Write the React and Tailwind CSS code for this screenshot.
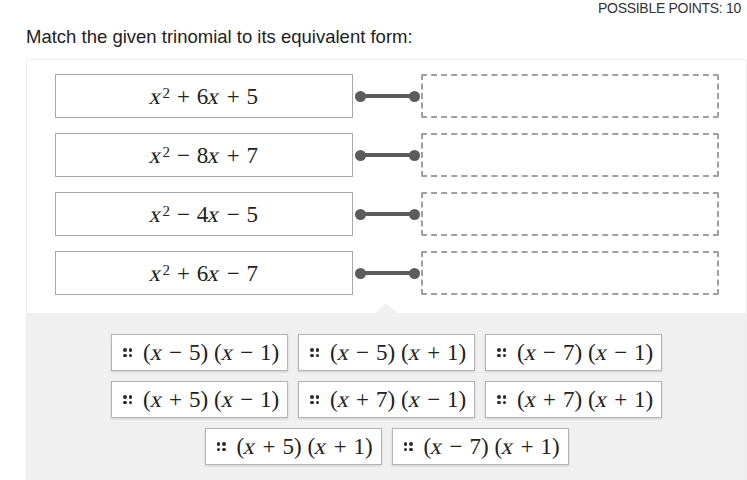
import { Fragment } from "react"

const trinomials = [
  ["+", "6", "+", "5"],
  ["−", "8", "+", "7"],
  ["−", "4", "−", "5"],
  ["+", "6", "−", "7"],
]

const answers = [
  [["−", "5"], ["−", "1"]],
  [["−", "5"], ["+", "1"]],
  [["−", "7"], ["−", "1"]],
  [["+", "5"], ["−", "1"]],
  [["+", "7"], ["−", "1"]],
  [["+", "7"], ["+", "1"]],
  [["+", "5"], ["+", "1"]],
  [["−", "7"], ["+", "1"]],
]

const mathFont = "font-['Liberation_Serif','DejaVu_Serif',serif]"

// variable x, slanted like a math italic
function X() {
  return <span className="inline-block -skew-x-12">x</span>
}

function Op({ children }) {
  return <span className="mx-[0.3em]">{children}</span>
}

function Trinomial({ terms }) {
  const [s1, b, s2, c] = terms
  return (
    <span className={`${mathFont} text-[23px] text-[#222] leading-none`}>
      <X />
      <sup className="text-[15px] relative -top-[6px] ml-[1px]">2</sup>
      <Op>{s1}</Op>
      {b}
      <X />
      <Op>{s2}</Op>
      {c}
    </span>
  )
}

function Factor({ sign, n }) {
  return (
    <span>
      (<X />
      <Op>{sign}</Op>
      {n})
    </span>
  )
}

function Grip() {
  return (
    <span className="grid grid-cols-2 gap-[2px] mr-[11px]">
      {[0, 1, 2, 3].map(i => (
        <span key={i} className="w-[3.5px] h-[3.5px] rounded-full bg-[#2a2a2a]"></span>
      ))}
    </span>
  )
}

function Chip({ factors }) {
  return (
    <div className="w-[177px] h-[37px] bg-white border border-[#b5b5b5] shadow-[0_1px_2px_rgba(0,0,0,0.15)] flex items-center pl-[11px]">
      <Grip />
      <span className={`${mathFont} text-[23px] text-[#222] leading-none whitespace-nowrap`}>
        {factors.map(([sign, n], i) => (
          <Fragment key={i}>
            {i > 0 && <span className="inline-block w-[6px]"></span>}
            <Factor sign={sign} n={n} />
          </Fragment>
        ))}
      </span>
    </div>
  )
}

export default function App() {
  return (
    <div className="w-[747px] h-[480px] bg-white overflow-hidden font-['Liberation_Sans',Arial,sans-serif] text-[#333] flex flex-col">
      {/* Header */}
      <div className="text-right text-[14px] leading-[14px] pr-[6px] pt-[1px] tracking-[-0.3px]">POSSIBLE POINTS: 10</div>
      <p className="pl-[26px] mt-[12px] text-[18.5px] leading-[20px] text-[#222]">Match the given trinomial to its equivalent form:</p>

      {/* Question body */}
      <div className="ml-[26px] mt-[12px] flex-1 flex flex-col border-l border-r border-t border-[#ededed] rounded-t-[3px]">
        <div className="flex flex-col gap-[15px] pt-[14px] pl-[28px] pb-[18px]">
          {trinomials.map((t, i) => (
            <div key={i} className="flex items-center">
              <div className="w-[298px] h-[44px] border border-[#a9a9a9] flex items-center justify-center">
                <Trinomial terms={t} />
              </div>
              <div className="w-[68px] h-[44px] relative flex items-center">
                <div className="absolute left-[2px] w-[11px] h-[11px] rounded-full bg-[#5c5c5c]"></div>
                <div className="absolute left-[7px] w-[55px] h-[4px] bg-[#5c5c5c]"></div>
                <div className="absolute left-[56px] w-[11px] h-[11px] rounded-full bg-[#5c5c5c]"></div>
              </div>
              <div className="w-[298px] h-[44px] border-2 border-dashed border-[#a0a0a0] rounded-[2px]"></div>
            </div>
          ))}
        </div>

        {/* Answer bank */}
        <div className="relative flex-1 bg-[#f0f0f0] pt-[21px]">
          <div className="absolute -top-[10px] left-[348px] w-0 h-0 border-l-[11px] border-r-[11px] border-b-[10px] border-l-transparent border-r-transparent border-b-[#f0f0f0]"></div>
          <div className="flex flex-wrap justify-center gap-x-[10px] gap-y-[10px] px-[80px]">
            {answers.map((f, i) => (
              <Chip key={i} factors={f} />
            ))}
          </div>
        </div>
      </div>
    </div>
  )
}
